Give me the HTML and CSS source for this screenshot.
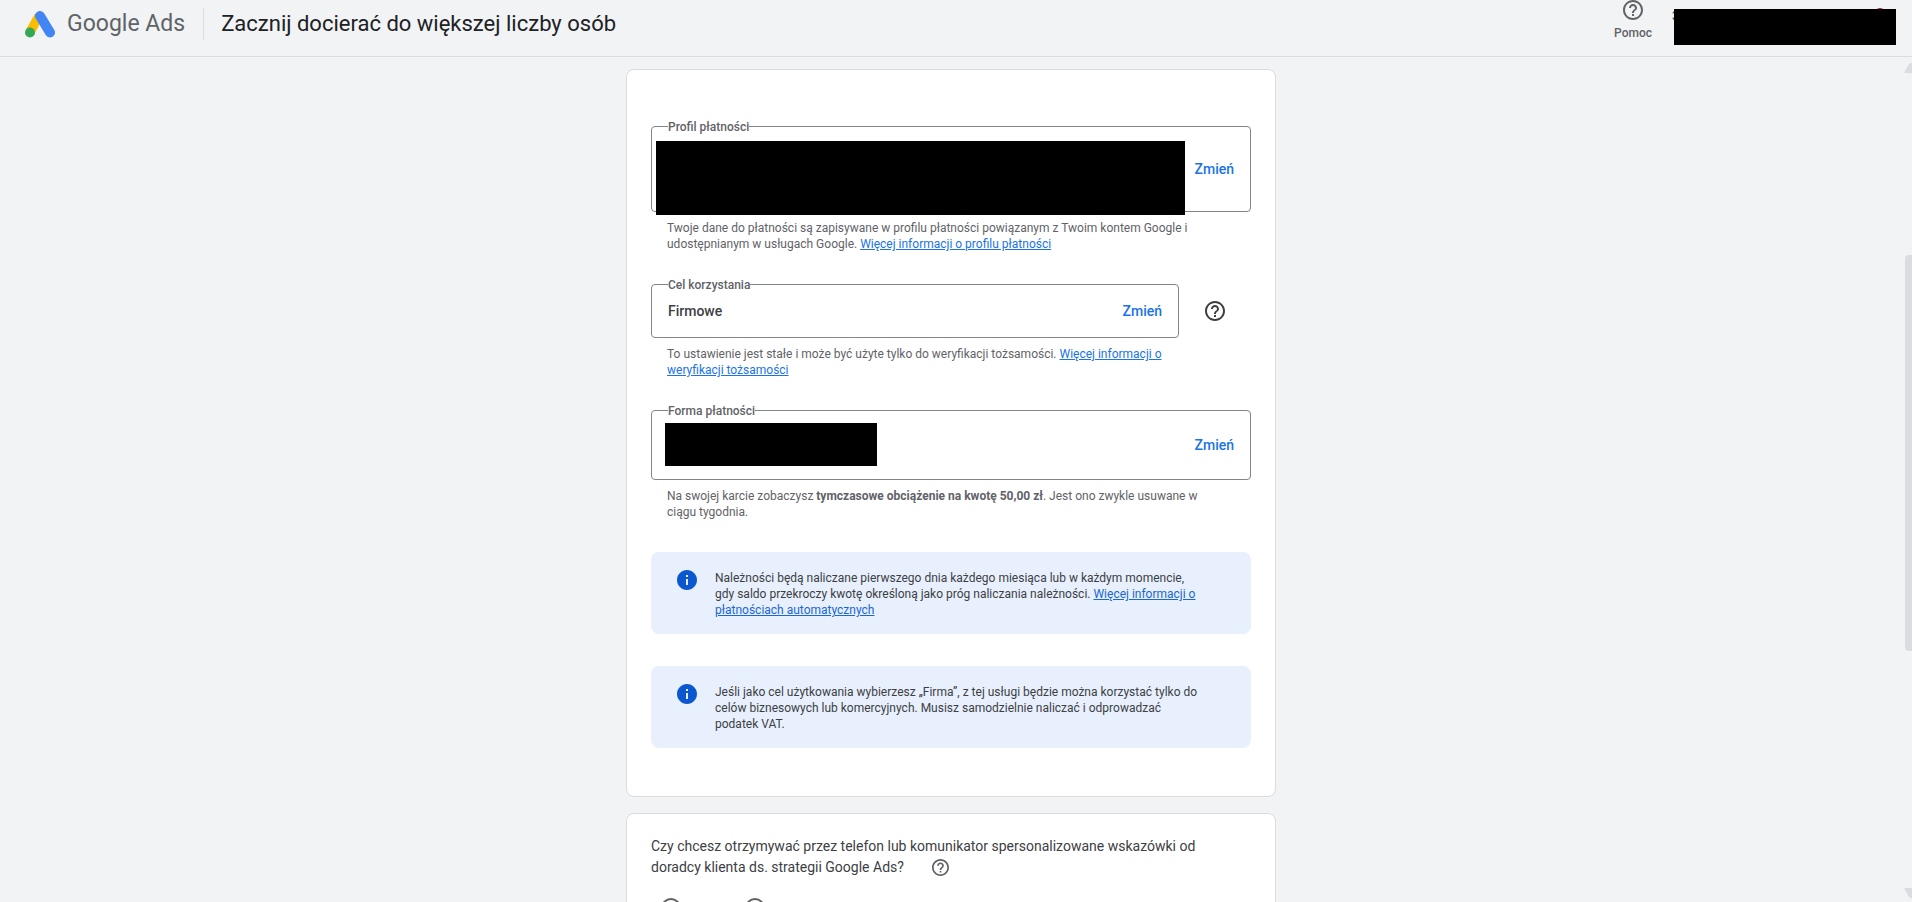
FILE: index.html
```
<!DOCTYPE html>
<html lang="pl">
<head>
<meta charset="utf-8">
<title>Google Ads</title>
<meta name="viewport" content="width=device-width, initial-scale=1">
<link rel="stylesheet" href="styles.css">
</head>
<body>
<svg class="defs" aria-hidden="true">
  <symbol id="help" viewBox="2 2 20 20"><path d="M11 18h2v-2h-2v2zm1-16C6.480 2 2 6.480 2 12s4.480 10 10 10 10-4.480 10-10S17.520 2 12 2zm0 18c-4.410 0-8-3.590-8-8s3.590-8 8-8 8 3.590 8 8-3.590 8-8 8zm0-14c-2.210 0-4 1.790-4 4h2c0-1.100.9-2 2-2s2 .9 2 2c0 2-3 1.750-3 5h2c0-2.250 3-2.500 3-5 0-2.210-1.790-4-4-4z"/></symbol>
  <symbol id="info" viewBox="2 2 20 20"><path d="M12 2C6.480 2 2 6.480 2 12s4.480 10 10 10 10-4.480 10-10S17.520 2 12 2zm1 15h-2v-6h2v6zm0-8h-2V7h2v2z"/></symbol>
</svg>
<header class="topbar">
  <div class="brand">
    <svg class="logo" viewBox="0 0 30 28" aria-hidden="true">
      <path d="M5 22 14 6" stroke="#fbbc04" stroke-width="9.500" fill="none"/>
      <path d="M15 6 25 22.500" stroke="#4285f4" stroke-width="10" stroke-linecap="round" fill="none"/>
      <circle cx="5" cy="22.500" r="5" fill="#34a853"/>
    </svg>
    <span class="product">Google Ads</span>
  </div>
  <h1 class="title">Zacznij docierać do większej liczby osób</h1>
  <button class="help-button" type="button"><svg class="icon20"><use href="#help"/></svg><span>Pomoc</span></button>
  <div class="account"><span class="account-id">3</span><span class="account-badge"></span><span class="account-cover"></span></div>
</header>
<main class="content">
  <section class="card payments">
    <div class="group">
      <fieldset class="field profile">
        <legend>Profil płatności</legend>
        <div class="redacted profile-data"></div>
        <button class="change" type="button">Zmień</button>
      </fieldset>
      <p class="hint">Twoje dane do płatności są zapisywane w profilu płatności powiązanym z Twoim kontem Google i<br>udostępnianym w usługach Google. <a href="#profil">Więcej informacji o profilu płatności</a></p>
    </div>
    <div class="group">
      <div class="with-help">
        <fieldset class="field purpose">
          <legend>Cel korzystania</legend>
          <span class="value">Firmowe</span>
          <button class="change" type="button">Zmień</button>
        </fieldset>
        <button class="icon-button dark" type="button" aria-label="Pomoc: cel korzystania"><svg class="icon20"><use href="#help"/></svg></button>
      </div>
      <p class="hint">To ustawienie jest stałe i może być użyte tylko do weryfikacji tożsamości. <a href="#weryfikacja">Więcej informacji o<br>weryfikacji tożsamości</a></p>
    </div>
    <div class="group">
      <fieldset class="field method">
        <legend>Forma płatności</legend>
        <div class="redacted method-data"></div>
        <button class="change" type="button">Zmień</button>
      </fieldset>
      <p class="hint">Na swojej karcie zobaczysz <strong>tymczasowe obciążenie na kwotę 50,00 zł</strong>. Jest ono zwykle usuwane w<br>ciągu tygodnia.</p>
    </div>
    <div class="notice">
      <svg class="icon20"><use href="#info"/></svg>
      <p>Należności będą naliczane pierwszego dnia każdego miesiąca lub w każdym momencie,<br>gdy saldo przekroczy kwotę określoną jako próg naliczania należności. <a href="#automatyczne">Więcej informacji o<br>płatnościach automatycznych</a></p>
    </div>
    <div class="notice">
      <svg class="icon20"><use href="#info"/></svg>
      <p>Jeśli jako cel użytkowania wybierzesz „Firma”, z tej usługi będzie można korzystać tylko do<br>celów biznesowych lub komercyjnych. Musisz samodzielnie naliczać i odprowadzać<br>podatek VAT.</p>
    </div>
  </section>
  <section class="card advice">
    <div class="question">
      <p>Czy chcesz otrzymywać przez telefon lub komunikator spersonalizowane wskazówki od<br>doradcy klienta ds. strategii Google Ads?<button class="icon-button inline" type="button" aria-label="Pomoc: wskazówki"><svg class="icon17"><use href="#help"/></svg></button></p>
    </div>
    <div class="choices">
      <input type="radio" name="advice" aria-label="Tak">
      <input type="radio" name="advice" aria-label="Nie">
    </div>
  </section>
</main>
<div class="scrollbar" aria-hidden="true">
  <svg class="arrow" viewBox="0 0 16 10"><path d="M1 10q-1-1 0-2L5 1q3-2 6 0l4 7v2z"/></svg>
  <div class="track"><div class="thumb"></div></div>
  <svg class="arrow" viewBox="0 0 16 10"><path d="M1 0q-1 1 0 2L5 9q3 2 6 0l4-7V0z"/></svg>
</div>
</body>
</html>
```
FILE: styles.css
```
* { box-sizing: border-box; }
html, body { height: 100%; }
body {
  margin: 0;
  display: flex;
  flex-direction: column;
  overflow: hidden;
  background: #f1f3f4;
  color: #3c4043;
  font-family: Roboto, "Noto Sans", sans-serif;
  font-size: 12px;
  line-height: 16px;
}
p { margin: 0; }
a { color: #1a73e8; text-decoration: underline; }
button { border: 0; padding: 0; background: none; font: inherit; color: inherit; cursor: pointer; }
.defs { display: none; }
.icon20 { display: block; flex: none; width: 20px; height: 20px; fill: currentColor; }
.icon17 { display: block; width: 17px; height: 17px; fill: currentColor; }

.topbar {
  display: flex;
  flex: none;
  align-items: flex-start;
  height: 57px;
  padding: 0 16px 0 25px;
  border-bottom: 1px solid #dadce0;
}
.brand {
  display: flex;
  align-items: center;
  gap: 12px;
  height: 32px;
  margin-top: 8px;
  padding-right: 18px;
  border-right: 1px solid #dadce0;
}
.logo { width: 30px; height: 28px; }
.product { color: #5f6368; font-size: 23px; line-height: 32px; }
.title { margin: 8px auto 0 17px; color: #202124; font-size: 22px; font-weight: 400; line-height: 32px; }
.help-button {
  display: flex;
  flex-direction: column;
  align-items: center;
  gap: 5px;
  margin-right: 22px;
  color: #5f6368;
  font-weight: 500;
}
.account { position: relative; width: 222px; height: 36px; margin-top: 9px; }
.account-id { position: absolute; left: -2px; top: -1px; }
.account-badge { position: absolute; right: 10px; top: -1px; width: 12px; height: 12px; border-radius: 6px; background: #b3123b; }
.account-cover { position: absolute; inset: 0; background: #000; }

.content {
  display: flex;
  flex: 1;
  flex-direction: column;
  align-items: center;
  gap: 16px;
  min-height: 0;
  padding: 12px 10px 0 0;
}
.card {
  flex: none;
  width: 100%;
  max-width: 650px;
  padding: 24px;
  border: 1px solid #dadce0;
  border-radius: 8px;
  background: #fff;
}
.payments {
  display: flex;
  flex-direction: column;
  gap: 32px;
  padding: 56px 24px 48px;
}
.field {
  position: relative;
  display: flex;
  align-items: center;
  width: 100%;
  min-width: 0;
  margin: 0;
  padding: 0 16px;
  border: 1px solid #80868b;
  border-radius: 4px;
}
.field legend {
  position: absolute;
  top: -8px;
  left: 16px;
  padding: 0;
  background: #fff;
  color: #5f6368;
  font-weight: 500;
}
.profile { height: 86px; }
.purpose { height: 54px; }
.method { height: 70px; }
.value { font-size: 14px; font-weight: 500; }
.change { margin-left: auto; color: #1a73e8; font-size: 14px; font-weight: 500; }
.redacted { position: absolute; background: #000; }
.profile-data { left: 4px; top: 14px; width: 529px; height: 74px; }
.method-data { left: 13px; top: 12px; width: 212px; height: 43px; }
.hint { margin-top: 8px; padding-left: 16px; color: #5f6368; }
.with-help { display: flex; align-items: center; gap: 26px; padding-right: 26px; }
.with-help .field { flex: 1; }
.icon-button { color: #5f6368; }
.dark { color: #3c4043; }
.notice {
  display: flex;
  gap: 18px;
  padding: 18px 24px 16px 26px;
  border-radius: 8px;
  background: #e8f0fe;
}
.notice .icon20 { color: #0b57d0; }
.notice a { color: #1967d2; }

.advice { padding-top: 22px; }
.question { font-size: 14px; line-height: 21px; }
.inline { display: inline-flex; align-items: center; height: 21px; margin-left: 28px; vertical-align: top; }
.choices { display: flex; gap: 64px; padding: 20px 0 0 10px; }
.choices input { appearance: none; width: 20px; height: 20px; margin: 0; border: 2px solid #5f6368; border-radius: 50%; }

.scrollbar {
  position: fixed;
  top: 57px;
  right: -8px;
  bottom: 0;
  display: flex;
  flex-direction: column;
  width: 16px;
  padding: 6px 0 4px;
}
.arrow { width: 16px; height: 10px; fill: #dadce0; }
.track { flex: 1; padding: 0 1px; }
.thumb { height: 396px; margin-top: 182px; border-radius: 4px; background: #dadce0; }
```
